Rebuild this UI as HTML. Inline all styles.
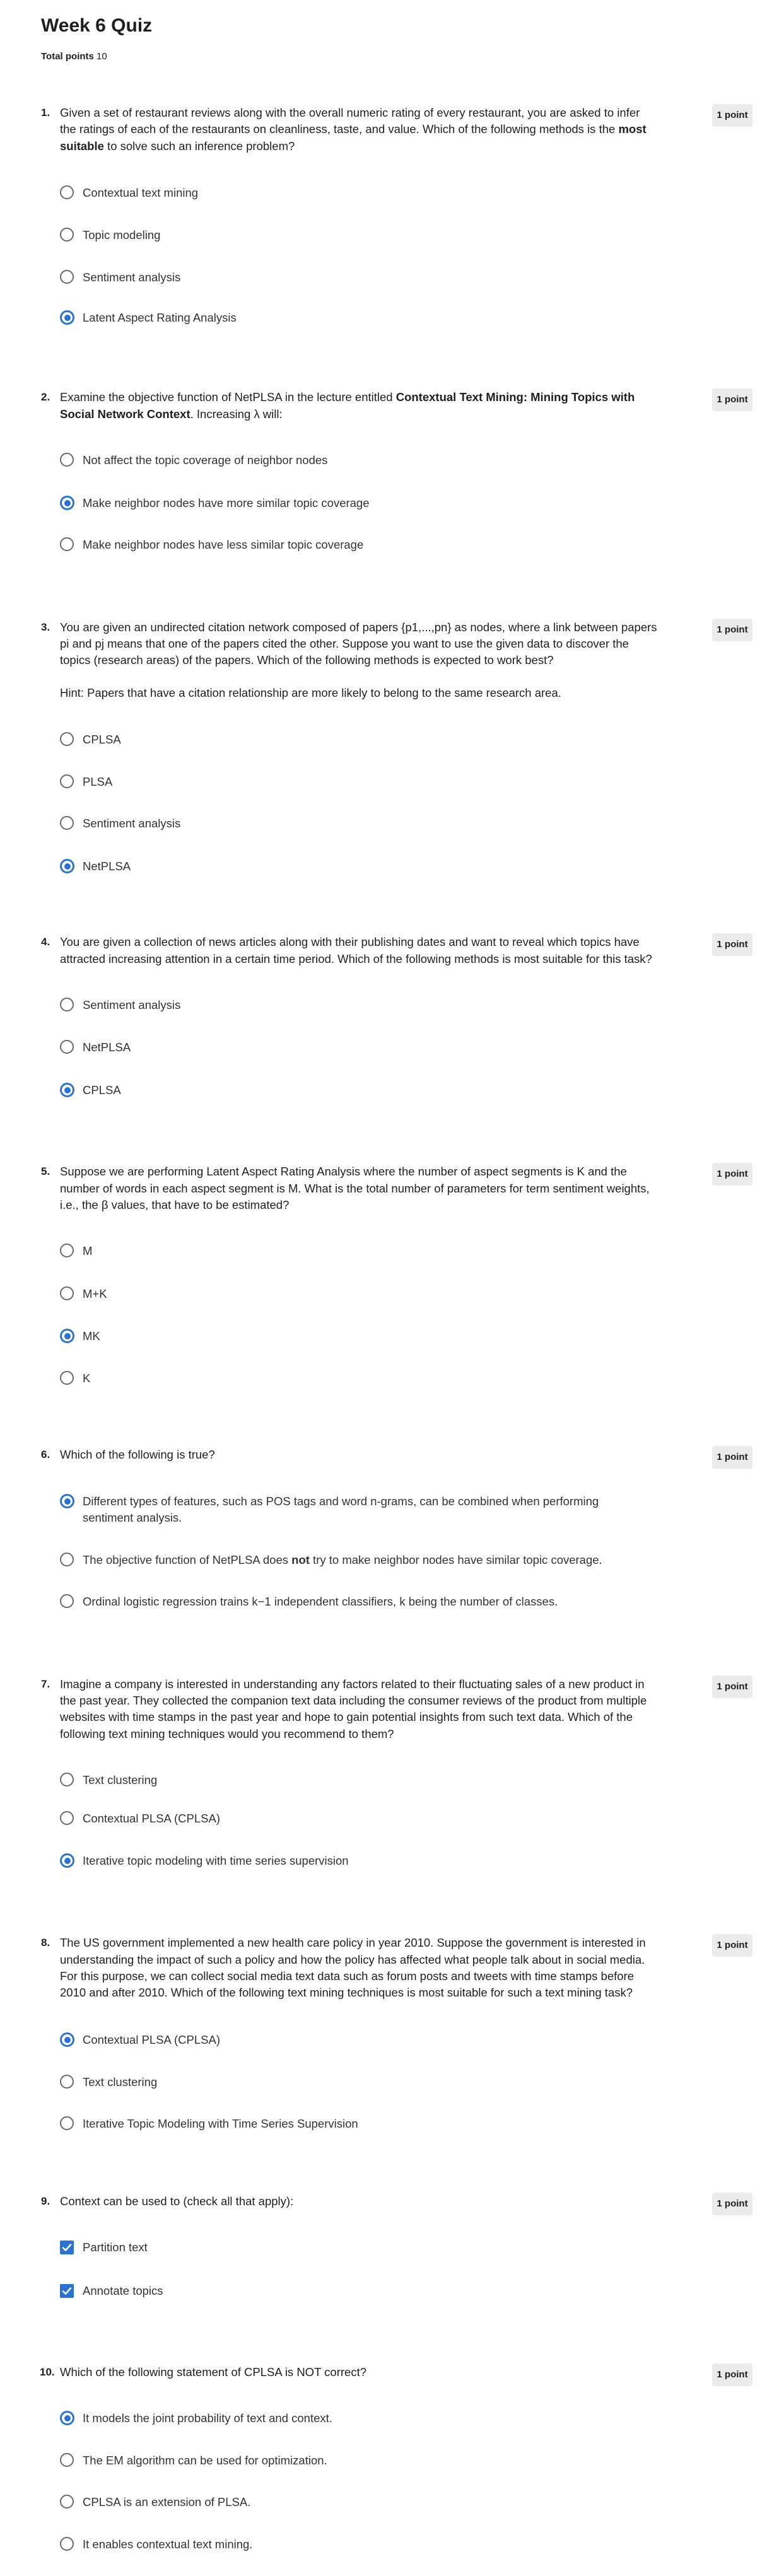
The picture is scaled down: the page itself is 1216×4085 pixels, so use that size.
<!DOCTYPE html>
<html><head><meta charset="utf-8"><style>
html,body{margin:0;padding:0;background:#fff;}
body{width:1216px;height:4085px;position:relative;overflow:hidden;font-family:"Liberation Sans",Arial,sans-serif;color:#1f1f1f;}
.l{position:absolute;left:95px;height:26px;line-height:26px;white-space:nowrap;font-size:18.5px;}
.n{position:absolute;left:65px;height:26px;line-height:26px;font-size:17px;font-weight:bold;}
.o{position:absolute;left:131px;height:26px;line-height:26px;white-space:nowrap;font-size:18.5px;color:#333;}
.r{position:absolute;left:95px;width:18px;height:18px;border:2px solid #6a6a6a;border-radius:50%;}
.r.c{border:3px solid #2a73d4;width:17px;height:17px;}
.r.c::after{content:"";position:absolute;left:3.5px;top:3.5px;width:10px;height:10px;border-radius:50%;background:#2a73d4;}
.cb{position:absolute;left:95px;width:22px;height:22px;background:#2a73d4;border-radius:2px;}
.b{position:absolute;left:1129px;width:64px;height:36px;background:#ebebeb;border-radius:4px;font-size:15px;font-weight:bold;line-height:36px;text-align:center;color:#1f1f1f;}
</style></head><body>
<div style="position:absolute;left:65px;top:21px;font-size:30px;font-weight:bold;line-height:40px;">Week 6 Quiz</div>
<div style="position:absolute;left:65px;top:81px;font-size:15px;line-height:18px;"><b>Total points</b> 10</div>

<!-- Q1 -->
<div class="n" style="top:166px">1.</div><div class="b" style="top:165px">1 point</div>
<div class="l" style="top:166px">Given a set of restaurant reviews along with the overall numeric rating of every restaurant, you are asked to infer</div>
<div class="l" style="top:192px">the ratings of each of the restaurants on cleanliness, taste, and value. Which of the following methods is the <b>most</b></div>
<div class="l" style="top:219px"><b>suitable</b> to solve such an inference problem?</div>
<div class="r" style="top:294px"></div><div class="o" style="top:293px">Contextual text mining</div>
<div class="r" style="top:361px"></div><div class="o" style="top:360px">Topic modeling</div>
<div class="r" style="top:428px"></div><div class="o" style="top:427px">Sentiment analysis</div>
<div class="r c" style="top:492px"></div><div class="o" style="top:491px">Latent Aspect Rating Analysis</div>

<!-- Q2 -->
<div class="n" style="top:617px">2.</div><div class="b" style="top:616px">1 point</div>
<div class="l" style="top:617px">Examine the objective function of NetPLSA in the lecture entitled <b>Contextual Text Mining: Mining Topics with</b></div>
<div class="l" style="top:644px"><b>Social Network Context</b>. Increasing λ will:</div>
<div class="r" style="top:718px"></div><div class="o" style="top:717px">Not affect the topic coverage of neighbor nodes</div>
<div class="r c" style="top:786px"></div><div class="o" style="top:785px">Make neighbor nodes have more similar topic coverage</div>
<div class="r" style="top:852px"></div><div class="o" style="top:851px">Make neighbor nodes have less similar topic coverage</div>

<!-- Q3 -->
<div class="n" style="top:982px">3.</div><div class="b" style="top:981px">1 point</div>
<div class="l" style="top:982px">You are given an undirected citation network composed of papers {p1,...,pn} as nodes, where a link between papers</div>
<div class="l" style="top:1008px">pi and pj means that one of the papers cited the other. Suppose you want to use the given data to discover the</div>
<div class="l" style="top:1034px">topics (research areas) of the papers. Which of the following methods is expected to work best?</div>
<div class="l" style="top:1086px">Hint: Papers that have a citation relationship are more likely to belong to the same research area.</div>
<div class="r" style="top:1161px"></div><div class="o" style="top:1160px">CPLSA</div>
<div class="r" style="top:1228px"></div><div class="o" style="top:1227px">PLSA</div>
<div class="r" style="top:1294px"></div><div class="o" style="top:1293px">Sentiment analysis</div>
<div class="r c" style="top:1362px"></div><div class="o" style="top:1361px">NetPLSA</div>

<!-- Q4 -->
<div class="n" style="top:1481px">4.</div><div class="b" style="top:1480px">1 point</div>
<div class="l" style="top:1481px">You are given a collection of news articles along with their publishing dates and want to reveal which topics have</div>
<div class="l" style="top:1508px">attracted increasing attention in a certain time period. Which of the following methods is most suitable for this task?</div>
<div class="r" style="top:1582px"></div><div class="o" style="top:1581px">Sentiment analysis</div>
<div class="r" style="top:1649px"></div><div class="o" style="top:1648px">NetPLSA</div>
<div class="r c" style="top:1717px"></div><div class="o" style="top:1716px">CPLSA</div>

<!-- Q5 -->
<div class="n" style="top:1845px">5.</div><div class="b" style="top:1844px">1 point</div>
<div class="l" style="top:1845px">Suppose we are performing Latent Aspect Rating Analysis where the number of aspect segments is K and the</div>
<div class="l" style="top:1872px">number of words in each aspect segment is M. What is the total number of parameters for term sentiment weights,</div>
<div class="l" style="top:1898px">i.e., the β values, that have to be estimated?</div>
<div class="r" style="top:1972px"></div><div class="o" style="top:1971px">M</div>
<div class="r" style="top:2040px"></div><div class="o" style="top:2039px">M+K</div>
<div class="r c" style="top:2107px"></div><div class="o" style="top:2106px">MK</div>
<div class="r" style="top:2174px"></div><div class="o" style="top:2173px">K</div>

<!-- Q6 -->
<div class="n" style="top:2294px">6.</div><div class="b" style="top:2293px">1 point</div>
<div class="l" style="top:2294px">Which of the following is true?</div>
<div class="r c" style="top:2369px"></div><div class="o" style="top:2368px">Different types of features, such as POS tags and word n-grams, can be combined when performing</div>
<div class="o" style="top:2394px">sentiment analysis.</div>
<div class="r" style="top:2462px"></div><div class="o" style="top:2461px">The objective function of NetPLSA does <b>not</b> try to make neighbor nodes have similar topic coverage.</div>
<div class="r" style="top:2528px"></div><div class="o" style="top:2527px">Ordinal logistic regression trains k−1 independent classifiers, k being the number of classes.</div>

<!-- Q7 -->
<div class="n" style="top:2658px">7.</div><div class="b" style="top:2657px">1 point</div>
<div class="l" style="top:2658px">Imagine a company is interested in understanding any factors related to their fluctuating sales of a new product in</div>
<div class="l" style="top:2684px">the past year. They collected the companion text data including the consumer reviews of the product from multiple</div>
<div class="l" style="top:2710px">websites with time stamps in the past year and hope to gain potential insights from such text data. Which of the</div>
<div class="l" style="top:2737px">following text mining techniques would you recommend to them?</div>
<div class="r" style="top:2811px"></div><div class="o" style="top:2810px">Text clustering</div>
<div class="r" style="top:2872px"></div><div class="o" style="top:2871px">Contextual PLSA (CPLSA)</div>
<div class="r c" style="top:2939px"></div><div class="o" style="top:2938px">Iterative topic modeling with time series supervision</div>

<!-- Q8 -->
<div class="n" style="top:3068px">8.</div><div class="b" style="top:3067px">1 point</div>
<div class="l" style="top:3068px">The US government implemented a new health care policy in year 2010. Suppose the government is interested in</div>
<div class="l" style="top:3095px">understanding the impact of such a policy and how the policy has affected what people talk about in social media.</div>
<div class="l" style="top:3121px">For this purpose, we can collect social media text data such as forum posts and tweets with time stamps before</div>
<div class="l" style="top:3147px">2010 and after 2010. Which of the following text mining techniques is most suitable for such a text mining task?</div>
<div class="r c" style="top:3223px"></div><div class="o" style="top:3222px">Contextual PLSA (CPLSA)</div>
<div class="r" style="top:3290px"></div><div class="o" style="top:3289px">Text clustering</div>
<div class="r" style="top:3356px"></div><div class="o" style="top:3355px">Iterative Topic Modeling with Time Series Supervision</div>

<!-- Q9 -->
<div class="n" style="top:3478px">9.</div><div class="b" style="top:3477px">1 point</div>
<div class="l" style="top:3478px">Context can be used to (check all that apply):</div>
<div class="cb" style="top:3553px"><svg width="22" height="22" viewBox="0 0 22 22"><path d="M5 11.5l4 4 8-9" fill="none" stroke="#fff" stroke-width="2.6" stroke-linecap="round" stroke-linejoin="round"/></svg></div><div class="o" style="top:3551px">Partition text</div>
<div class="cb" style="top:3622px"><svg width="22" height="22" viewBox="0 0 22 22"><path d="M5 11.5l4 4 8-9" fill="none" stroke="#fff" stroke-width="2.6" stroke-linecap="round" stroke-linejoin="round"/></svg></div><div class="o" style="top:3620px">Annotate topics</div>

<!-- Q10 -->
<div class="n" style="top:3749px;left:63px">10.</div><div class="b" style="top:3748px">1 point</div>
<div class="l" style="top:3749px">Which of the following statement of CPLSA is NOT correct?</div>
<div class="r c" style="top:3823px"></div><div class="o" style="top:3822px">It models the joint probability of text and context.</div>
<div class="r" style="top:3890px"></div><div class="o" style="top:3889px">The EM algorithm can be used for optimization.</div>
<div class="r" style="top:3956px"></div><div class="o" style="top:3955px">CPLSA is an extension of PLSA.</div>
<div class="r" style="top:4023px"></div><div class="o" style="top:4022px">It enables contextual text mining.</div>
</body></html>
